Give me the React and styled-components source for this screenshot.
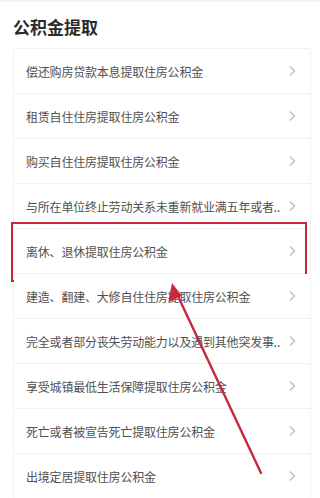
import styled, { createGlobalStyle } from "styled-components";

const GlobalStyle = createGlobalStyle`
  html, body {
    margin: 0;
    padding: 0;
    background: #fff;
  }
  body {
    font-family: "Noto Sans CJK SC", "Noto Sans", sans-serif;
  }
`;

const Page = styled.div`
  position: relative;
  width: 320px;
  height: 498px;
  overflow: hidden;
  background: #fff;
  border-top: 2px solid #f2f3f5;
  box-sizing: border-box;
`;

const Title = styled.h1`
  margin: 0;
  padding: 14px 13px 10px;
  font-size: 17px;
  font-weight: 700;
  line-height: 22px;
  color: #2b2b2b;
`;

const List = styled.div`
  display: flex;
  flex-direction: column;
  gap: 1px;
  margin: 0 9px 0 13px;
  background: #f1f1f1;
  border: 1px solid #f1f1f1;
  border-radius: 3px;
`;

const Row = styled.div`
  position: relative;
  display: flex;
  align-items: center;
  height: 44px;
  padding: 0 14px 0 12px;
  background: #fff;

  ${(p) =>
    p.$marked &&
    `
    &::after {
      content: "";
      position: absolute;
      left: -3px;
      right: 3px;
      top: -7px;
      bottom: -9px;
      border: 2px solid #c8283c;
      pointer-events: none;
    }
  `}
`;

const Label = styled.span`
  flex: 1;
  min-width: 0;
  font-size: 12px;
  letter-spacing: -0.2px;
  color: #505050;
  white-space: nowrap;
  overflow: hidden;
  text-overflow: ellipsis;
`;

const Chevron = styled.svg`
  flex: none;
  width: 8px;
  height: 12px;
  margin-left: 6px;
`;

const Arrow = styled.svg`
  position: absolute;
  left: 0;
  top: 0;
  width: 320px;
  height: 498px;
  pointer-events: none;
`;

// long titles are cut the way the app shows them
const items = [
  "偿还购房贷款本息提取住房公积金",
  "租赁自住住房提取住房公积金",
  "购买自住住房提取住房公积金",
  "与所在单位终止劳动关系未重新就业满五年或者..",
  "离休、退休提取住房公积金",
  "建造、翻建、大修自住住房提取住房公积金",
  "完全或者部分丧失劳动能力以及遇到其他突发事..",
  "享受城镇最低生活保障提取住房公积金",
  "死亡或者被宣告死亡提取住房公积金",
  "出境定居提取住房公积金",
];

function App() {
  return (
    <Page>
      <GlobalStyle />
      <Title>公积金提取</Title>
      <List>
        {items.map((text, i) => (
          <Row key={text} $marked={i === 4}>
            <Label>{text}</Label>
            <Chevron viewBox="0 0 8 12">
              <path d="M2 1.5 L6.5 6 L2 10.5" fill="none" stroke="#bdbdbd" strokeWidth="1.4" />
            </Chevron>
          </Row>
        ))}
      </List>
      <Arrow viewBox="0 0 320 498">
        <line x1="261" y1="471" x2="176" y2="290" stroke="#c8283c" strokeWidth="2.4" strokeLinecap="round" />
        <path d="M172 281 L168.5 300 L182 294 Z" fill="#c8283c" />
      </Arrow>
    </Page>
  );
}

export default App;
